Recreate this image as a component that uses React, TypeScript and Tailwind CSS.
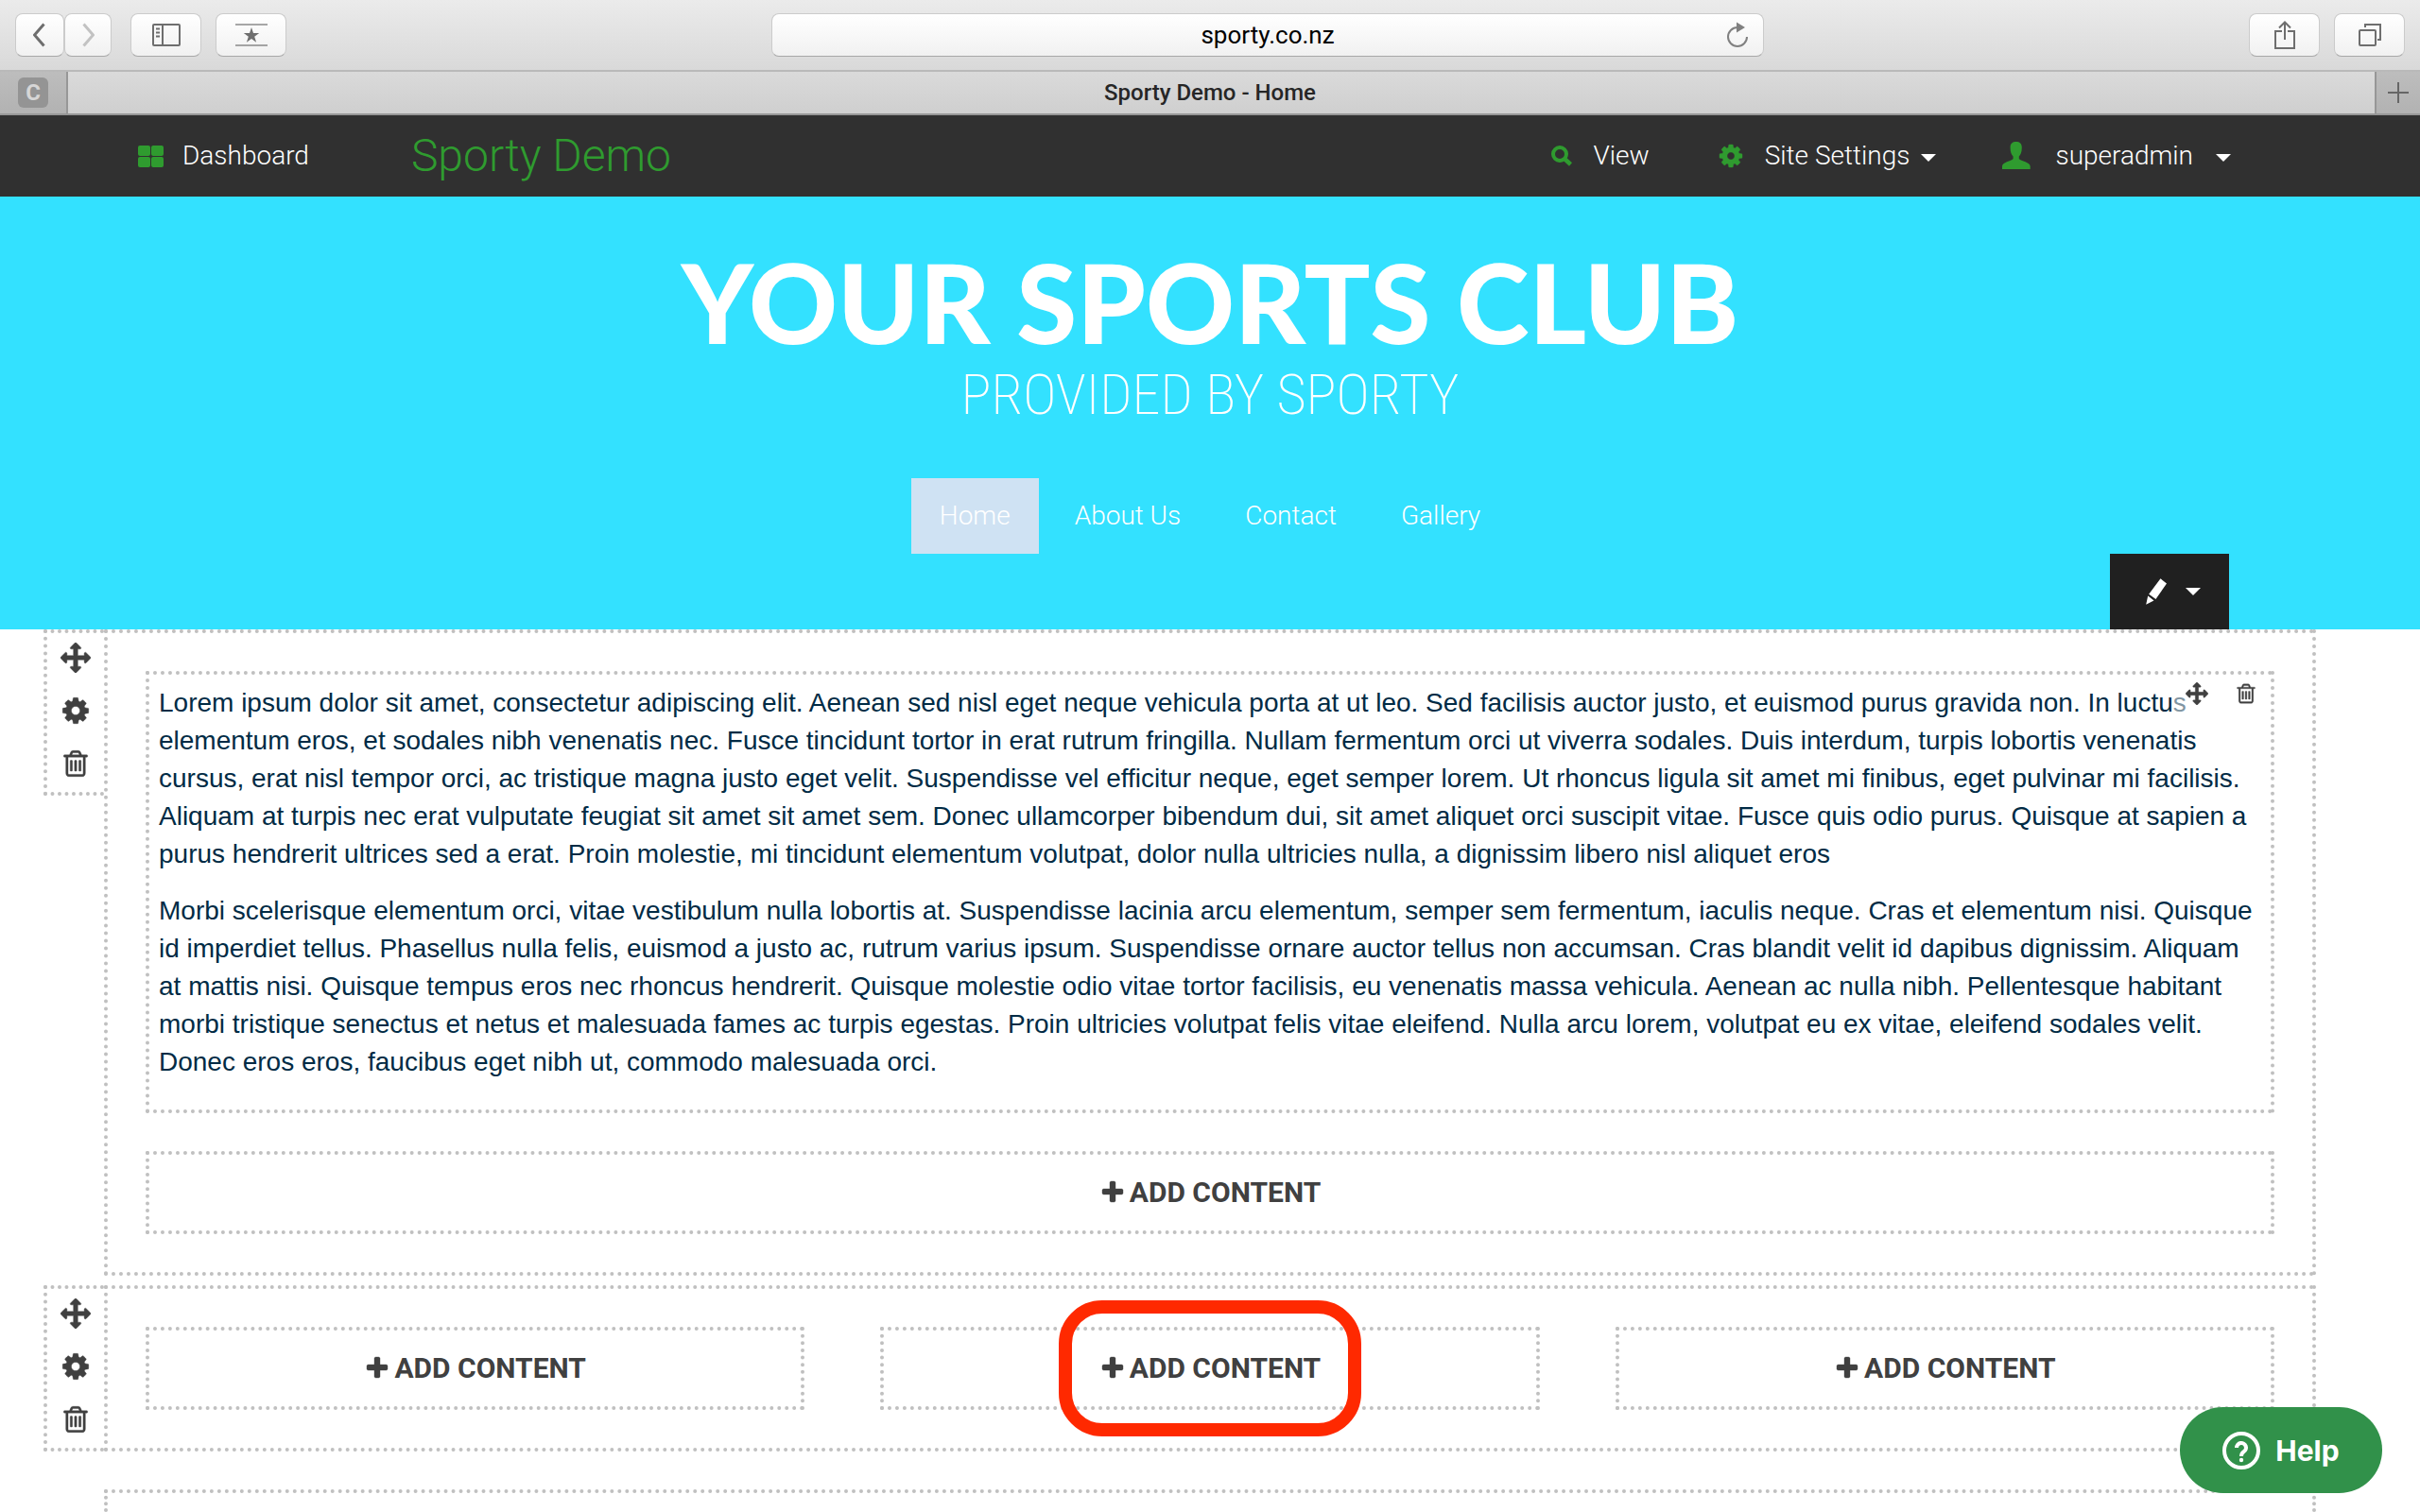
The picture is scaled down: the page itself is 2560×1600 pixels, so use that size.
import type { ReactNode } from 'react';

const ICONS = {
  arrows:
    'M1792 896q0 26-19 45l-256 256q-19 19-45 19t-45-19-19-45v-128h-384v384h128q26 0 45 19t19 45-19 45l-256 256q-19 19-45 19t-45-19l-256-256q-19-19-19-45t19-45 45-19h128v-384h-384v128q0 26-19 45t-45 19-45-19l-256-256q-19-19-19-45t19-45l256-256q19-19 45-19t45 19 19 45v128h384v-384h-128q-26 0-45-19t-19-45 19-45l256-256q19-19 45-19t45 19l256 256q19 19 19 45t-19 45-45 19h-128v384h384v-128q0-26 19-45t45-19 45 19l256 256q19 19 19 45z',
  cog: 'M1152 896q0-106-75-181t-181-75-181 75-75 181 75 181 181 75 181-75 75-181zm512-109v222q0 12-8 23t-20 13l-185 28q-19 54-39 91 35 50 107 138 10 12 10 25t-9 23q-27 37-99 108t-94 71q-12 0-26-9l-138-108q-44 23-91 38-16 136-29 186-7 28-36 28h-222q-14 0-24.5-8.5t-11.5-21.5l-28-184q-49-16-90-37l-141 107q-10 9-25 9-14 0-25-11-126-114-165-168-7-10-7-23 0-12 8-23 15-21 51-66.5t54-70.5q-27-50-41-99l-183-27q-13-2-21-12.5t-8-23.5v-222q0-12 8-23t19-13l186-28q14-46 39-92-40-57-107-138-10-12-10-24 0-10 9-23 26-36 98.5-107.5t94.5-71.5q13 0 26 10l138 107q44-23 91-38 16-136 29-186 7-28 36-28h222q14 0 24.5 8.5t11.5 21.5l28 184q49 16 90 37l142-107q9-9 24-9 13 0 25 10 129 119 165 170 7 8 7 22 0 12-8 23-15 21-51 66.5t-54 70.5q26 50 41 98l183 28q13 2 21 12.5t8 23.5z',
  trash:
    'M704 736v576q0 14-9 23t-23 9h-64q-14 0-23-9t-9-23v-576q0-14 9-23t23-9h64q14 0 23 9t9 23zm256 0v576q0 14-9 23t-23 9h-64q-14 0-23-9t-9-23v-576q0-14 9-23t23-9h64q14 0 23 9t9 23zm256 0v576q0 14-9 23t-23 9h-64q-14 0-23-9t-9-23v-576q0-14 9-23t23-9h64q14 0 23 9t9 23zm128 724v-948h-896v948q0 22 7 40.5t14.5 27 10.5 8.5h832q3 0 10.5-8.5t14.5-27 7-40.5zm-672-1076h448l-48-117q-7-9-17-11h-317q-10 2-17 11zm928 32v64q0 14-9 23t-23 9h-96v948q0 83-47 143.5t-113 60.5h-832q-66 0-113-58.5t-47-141.5v-952h-96q-14 0-23-9t-9-23v-64q0-14 9-23t23-9h309l70-167q15-37 54-63t79-26h320q40 0 79 26t54 63l70 167h309q14 0 23 9t9 23z',
  plus: 'M1600 736v192q0 40-28 68t-68 28h-416v416q0 40-28 68t-68 28h-192q-40 0-68-28t-28-68v-416h-416q-40 0-68-28t-28-68v-192q0-40 28-68t68-28h416v-416q0-40 28-68t68-28h192q40 0 68 28t28 68v416h416q40 0 68 28t28 68z',
};

const PARAGRAPHS = [
  'Lorem ipsum dolor sit amet, consectetur adipiscing elit. Aenean sed nisl eget neque vehicula porta at ut leo. Sed facilisis auctor justo, et euismod purus gravida non. In luctus elementum eros, et sodales nibh venenatis nec. Fusce tincidunt tortor in erat rutrum fringilla. Nullam fermentum orci ut viverra sodales. Duis interdum, turpis lobortis venenatis cursus, erat nisl tempor orci, ac tristique magna justo eget velit. Suspendisse vel efficitur neque, eget semper lorem. Ut rhoncus ligula sit amet mi finibus, eget pulvinar mi facilisis. Aliquam at turpis nec erat vulputate feugiat sit amet sit amet sem. Donec ullamcorper bibendum dui, sit amet aliquet orci suscipit vitae. Fusce quis odio purus. Quisque at sapien a purus hendrerit ultrices sed a erat. Proin molestie, mi tincidunt elementum volutpat, dolor nulla ultricies nulla, a dignissim libero nisl aliquet eros',
  'Morbi scelerisque elementum orci, vitae vestibulum nulla lobortis at. Suspendisse lacinia arcu elementum, semper sem fermentum, iaculis neque. Cras et elementum nisi. Quisque id imperdiet tellus. Phasellus nulla felis, euismod a justo ac, rutrum varius ipsum. Suspendisse ornare auctor tellus non accumsan. Cras blandit velit id dapibus dignissim. Aliquam at mattis nisi. Quisque tempus eros nec rhoncus hendrerit. Quisque molestie odio vitae tortor facilisis, eu venenatis massa vehicula. Aenean ac nulla nibh. Pellentesque habitant morbi tristique senectus et netus et malesuada fames ac turpis egestas. Proin ultricies volutpat felis vitae eleifend. Nulla arcu lorem, volutpat eu ex vitae, eleifend sodales velit. Donec eros eros, faucibus eget nibh ut, commodo malesuada orci.',
];

const PAGES = ['Home', 'About Us', 'Contact', 'Gallery'];

function Icon({ name, className }: { name: keyof typeof ICONS; className: string }) {
  return (
    <svg viewBox="0 0 1792 1792" fill="currentColor" stroke="currentColor" strokeWidth="24" className={className} aria-hidden="true">
      <path d={ICONS[name]} />
    </svg>
  );
}

function Caret({ className = '' }: { className?: string }) {
  return (
    <svg viewBox="0 0 16 8" fill="currentColor" className={`w-4 h-2 ${className}`} aria-hidden="true">
      <path d="M0 0h16L8 8z" />
    </svg>
  );
}

function ToolbarButton({ label, className, children }: { label: string; className: string; children: ReactNode }) {
  return (
    <button
      aria-label={label}
      className={`h-[46px] flex items-center justify-center rounded-lg border border-[#cbcbcb] border-b-[#a8a8a8] bg-linear-to-b from-white to-[#f1f1f1] text-[#6e6e6e] ${className}`}
    >
      {children}
    </button>
  );
}

function BrowserChrome() {
  return (
    <header>
      <div className="h-[76px] flex items-center justify-between border-b-2 border-[#b9b9b9] bg-linear-to-b from-[#ebebeb] to-[#d9d9d9]">
        <div className="flex ml-4">
          <ToolbarButton label="Back" className="w-[52px]">
            <svg width="14" height="26" viewBox="0 0 14 26" fill="none" stroke="currentColor" strokeWidth="3">
              <path d="M11.500 1.500 1.500 13l10 11.500" />
            </svg>
          </ToolbarButton>
          <ToolbarButton label="Forward" className="w-[50px]">
            <svg width="14" height="26" viewBox="0 0 14 26" fill="none" stroke="#c2c2c2" strokeWidth="3">
              <path d="M2.500 1.500 12.500 13l-10 11.500" />
            </svg>
          </ToolbarButton>
          <ToolbarButton label="Sidebar" className="w-[75px] ml-5">
            <svg width="30" height="24" viewBox="0 0 30 24" fill="none" stroke="currentColor" strokeWidth="2">
              <rect x="1" y="1" width="28" height="22" rx="1" />
              <path d="M11 1v22" />
              <path d="M4 5.500h4M4 9.500h4M4 13.500h4" />
            </svg>
          </ToolbarButton>
          <ToolbarButton label="Top sites" className="w-[75px] ml-[15px]">
            <svg width="34" height="24" viewBox="0 0 34 24" fill="currentColor">
              <path d="M0 0h34v2H0zM0 22h34v2H0z" opacity="0.6" />
              <path d="M17 4l2 6h6.200l-5 3.700 1.900 6L17 16l-5.100 3.700 1.900-6-5-3.700H15z" />
            </svg>
          </ToolbarButton>
        </div>

        <div className="relative w-[41%]">
          <input
            type="text"
            aria-label="Address"
            defaultValue="sporty.co.nz"
            className="block w-full h-[46px] rounded-lg border border-[#cbcbcb] border-b-[#a8a8a8] bg-linear-to-b from-white to-[#f1f1f1] text-center text-[26px] text-black outline-none"
          />
          <button aria-label="Reload" className="absolute right-4 inset-y-0 text-[#808080]">
            <svg width="24" height="28" viewBox="0 0 24 28" fill="none" stroke="currentColor" strokeWidth="2">
              <path d="M12 6a10 10 0 1 0 10 10" />
              <path d="M11 0.500v11l9-5.500z" fill="currentColor" stroke="none" />
            </svg>
          </button>
        </div>

        <div className="flex gap-[15px] mr-4">
          <ToolbarButton label="Share" className="w-[75px]">
            <svg width="22" height="30" viewBox="0 0 22 30" fill="none" stroke="currentColor" strokeWidth="2">
              <path d="M8 11H1v18h20V11h-7M11 20V1.500M5 7.500l6-6 6 6" />
            </svg>
          </ToolbarButton>
          <ToolbarButton label="Show tabs" className="w-[75px]">
            <svg width="24" height="24" viewBox="0 0 24 24" fill="none" stroke="currentColor" strokeWidth="2">
              <rect x="1" y="7" width="17" height="16" rx="1" />
              <path d="M7 4V1h16v16h-3" />
            </svg>
          </ToolbarButton>
        </div>
      </div>

      <div className="h-[46px] flex border-b-2 border-[#979797] bg-linear-to-b from-[#dadada] to-[#cfcfcf]">
        <button aria-label="Pinned tab" className="w-[72px] flex items-center justify-center border-r-2 border-[#979797] bg-linear-to-b from-[#bdbdbd] to-[#b2b2b2]">
          <span className="w-8 h-8 rounded-md bg-[#949494] text-[#d6d6d6] text-2xl leading-8 font-bold">C</span>
        </button>
        <button className="flex-1 pr-6 text-2xl font-medium text-[#262626]">Sporty Demo - Home</button>
        <button aria-label="New tab" className="w-12 flex items-center justify-center border-l-2 border-[#979797] bg-linear-to-b from-[#bdbdbd] to-[#b2b2b2] text-[#666]">
          <svg width="22" height="22" viewBox="0 0 22 22" stroke="currentColor" strokeWidth="2">
            <path d="M11 0v22M0 11h22" />
          </svg>
        </button>
      </div>
    </header>
  );
}

function AdminBar() {
  return (
    <nav className="h-[86px] flex items-center pl-[146px] pr-[200px] bg-[#303030] text-white text-[28px] font-light">
      <a href="#dashboard" className="flex items-center gap-5">
        <svg width="27" height="23" viewBox="0 0 27 23" fill="#2f9b2f">
          <rect width="13" height="11" rx="2" />
          <rect x="14" width="13" height="11" rx="2" />
          <rect y="12" width="13" height="11" rx="2" />
          <rect x="14" y="12" width="13" height="11" rx="2" />
        </svg>
        Dashboard
      </a>
      <a href="#site" className="ml-[108px] text-5xl text-[#2f9b2f]">Sporty Demo</a>

      <a href="#view" className="ml-auto flex items-center gap-[22px]">
        <svg width="23" height="22" viewBox="0 0 23 22" fill="none" stroke="#2f9b2f">
          <circle cx="9" cy="9" r="7" strokeWidth="4" />
          <path d="M13.500 13.500 20.500 20" strokeWidth="4.500" />
        </svg>
        View
      </a>
      <button className="ml-[72px] flex items-center">
        <Icon name="cog" className="w-7 h-7 mr-[22px] text-[#2f9b2f]" />
        Site Settings
        <Caret className="ml-3 mt-1" />
      </button>
      <button className="ml-[70px] flex items-center">
        <svg width="30" height="30" viewBox="0 0 30 30" fill="#2f9b2f" className="mr-[26px]">
          <path d="M14.700 0C18.500 0 20.800 1.800 20.800 6c0 5-1.300 8-3 9.500v2.500c2 2.500 11.900 3.500 11.900 8v3H0v-3c0-4.500 9.600-5.500 11.600-8v-2.500C9.900 14 8.600 11 8.600 6c0-4.200 2.400-6 6.100-6z" />
        </svg>
        superadmin
        <Caret className="ml-6 mt-1" />
      </button>
    </nav>
  );
}

function SiteHeader() {
  return (
    <div className="pt-[52px] bg-[#33e1ff] text-white text-center">
      <h1 className="font-[Lato,sans-serif] font-black text-[116px] leading-[120px]">YOUR SPORTS CLUB</h1>
      <p className="font-['Roboto_Condensed',Roboto,sans-serif] font-extralight text-6xl leading-[76px]">PROVIDED BY SPORTY</p>
      <nav className="mt-[50px] flex justify-center gap-2 text-[28px] font-light">
        {PAGES.map((page) => (
          <a
            key={page}
            href={`#${page}`}
            className={page === 'Home' ? 'px-[30px] leading-[80px] bg-[#cfe2f3]' : 'px-[30px] leading-[80px]'}
          >
            {page}
          </a>
        ))}
      </nav>
      <div className="flex justify-end pr-[202px]">
        <button aria-label="Edit header" className="w-[126px] h-20 pl-2 flex items-center justify-center gap-5 bg-[#202020]">
          <svg width="22" height="28" viewBox="0 0 22 28" fill="currentColor">
            <path d="M15.500 0.300 22 5.500 10.500 22 3.200 16.700zM2.200 18.500 8.500 23.500 0.200 27.800z" />
          </svg>
          <Caret />
        </button>
      </div>
    </div>
  );
}

function RowTools() {
  return (
    <div className="w-16 self-start flex flex-col border-4 border-r-0 border-dotted border-[#c0c0c0]">
      <button aria-label="Move row" className="h-14 pb-1 flex items-center justify-center">
        <Icon name="arrows" className="w-8 h-8" />
      </button>
      <button aria-label="Row settings" className="h-14 pb-1 flex items-center justify-center">
        <Icon name="cog" className="w-8 h-8" />
      </button>
      <button aria-label="Delete row" className="h-14 pb-1 flex items-center justify-center">
        <Icon name="trash" className="w-8 h-8" />
      </button>
    </div>
  );
}

function AddContent({ highlighted = false }: { highlighted?: boolean }) {
  return (
    <div className="relative flex-1">
      <button className="w-full h-[88px] flex items-center justify-center gap-1 border-4 border-dotted border-[#c0c0c0] text-3xl font-bold">
        <Icon name="plus" className="w-7 h-7" />
        ADD CONTENT
      </button>
      {highlighted && (
        <div className="absolute -inset-y-7 left-1/2 w-80 -translate-x-1/2 rounded-[46px] border-[14px] border-[#ff2900] pointer-events-none" />
      )}
    </div>
  );
}

export default function App() {
  return (
    <div className="min-h-screen flex flex-col bg-white text-[#404040] font-[Roboto,sans-serif]">
      <BrowserChrome />
      <AdminBar />
      <SiteHeader />

      <main className="flex-1 flex flex-col pl-[46px] pr-[110px]">
        <section className="flex">
          <RowTools />
          <div className="flex-1 flex flex-col gap-10 p-10 border-4 border-dotted border-[#c0c0c0]">
            <article className="relative p-[10px] border-4 border-dotted border-[#c0c0c0] text-[#002b45] text-[28px] leading-10 font-['Liberation_Sans',Arial,sans-serif]">
              {PARAGRAPHS.map((text) => (
                <p key={text} className="mb-5">{text}</p>
              ))}
              {/* Block tools sit over the first line of text */}
              <div className="absolute top-0 right-0 h-10 flex bg-white/50 text-[#404040]">
                <button aria-label="Move block" className="w-[52px] flex items-center justify-center">
                  <Icon name="arrows" className="w-6 h-6" />
                </button>
                <button aria-label="Delete block" className="w-[52px] flex items-center justify-center">
                  <Icon name="trash" className="w-6 h-6" />
                </button>
              </div>
            </article>
            <AddContent />
          </div>
        </section>

        <section className="mt-[10px] flex">
          <RowTools />
          <div className="flex-1 flex gap-20 p-10 border-4 border-dotted border-[#c0c0c0]">
            <AddContent />
            <AddContent highlighted />
            <AddContent />
          </div>
        </section>

        <section className="mt-10 ml-16 flex-1 min-h-6 border-4 border-b-0 border-dotted border-[#c0c0c0]" />
      </main>

      <button className="fixed right-10 bottom-5 w-[214px] h-[91px] flex items-center justify-center gap-4 rounded-full bg-[#31914a] text-white text-3xl font-bold font-[Inter,sans-serif]">
        <svg width="40" height="40" viewBox="0 0 40 40" fill="none" stroke="currentColor" strokeWidth="4">
          <circle cx="20" cy="20" r="18" />
          <path d="M15 17a5 5 0 1 1 7.500 4.300Q20 22.800 20 26" />
          <circle cx="20" cy="30" r="2.200" fill="currentColor" stroke="none" />
        </svg>
        Help
      </button>
    </div>
  );
}
